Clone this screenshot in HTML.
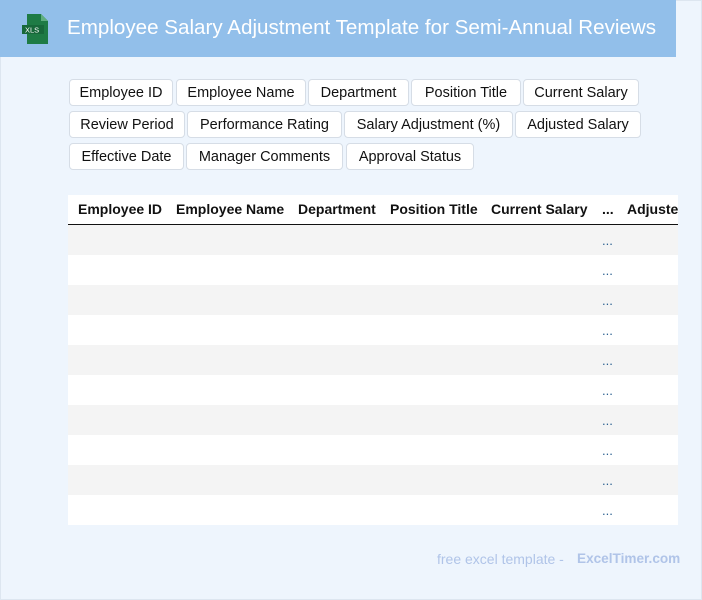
<!DOCTYPE html>
<html><head><style>
body{margin:0;width:702px;height:600px;background:#eef5fd;font-family:"Liberation Sans",sans-serif;position:relative;overflow:hidden}
.frame{position:absolute;left:0;top:0;width:700px;height:598px;border:1px solid #dde6f0;}
.hdr{position:absolute;left:0;top:0;width:676px;height:57px;background:#92bfea}
.hdr h1{position:absolute;left:67px;top:16px;margin:0;font-size:20.6px;font-weight:normal;color:#fff;white-space:nowrap}
.tag{position:absolute;height:27px;line-height:27px;background:#fff;border:1px solid #d6dde6;border-radius:4px;font-size:14.5px;color:#111;text-align:center;box-sizing:border-box}
.tbl{position:absolute;left:68px;top:195px;width:610px;height:330px;background:#fff;overflow:hidden}
.th{position:absolute;top:0;height:29px;line-height:29px;font-weight:bold;font-size:14px;color:#111;white-space:nowrap}
.line{position:absolute;left:0;top:29px;width:610px;height:1.5px;background:#111}
.row{position:absolute;left:0;width:610px;height:30px}
.dots{position:absolute;left:534px;font-size:13px;color:#2a5f8f}
.foot{position:absolute;top:551px;font-size:14px;color:#b0c4e8}
</style></head><body>
<div class="frame"></div>
<div class="hdr">
<svg style="position:absolute;left:22px;top:14px" width="28" height="30" viewBox="0 0 28 30"><path d="M5 0h14l7 7v23H5z" fill="#1e7b45"/><path d="M19 0v7h7z" fill="#5fae7f"/><rect x="0" y="11" width="22" height="9" fill="#17683a"/><text x="3" y="18.5" font-size="7.5" fill="#fff" font-family="Liberation Sans">XLS</text></svg>
<h1>Employee Salary Adjustment Template for Semi-Annual Reviews</h1>
</div>
<div class="tag" style="left:69px;top:79px;width:104px">Employee ID</div>
<div class="tag" style="left:176px;top:79px;width:130px">Employee Name</div>
<div class="tag" style="left:308px;top:79px;width:101px">Department</div>
<div class="tag" style="left:411px;top:79px;width:110px">Position Title</div>
<div class="tag" style="left:523px;top:79px;width:116px">Current Salary</div>
<div class="tag" style="left:69px;top:111px;width:116px">Review Period</div>
<div class="tag" style="left:187px;top:111px;width:155px">Performance Rating</div>
<div class="tag" style="left:344px;top:111px;width:169px">Salary Adjustment (%)</div>
<div class="tag" style="left:515px;top:111px;width:126px">Adjusted Salary</div>
<div class="tag" style="left:69px;top:143px;width:115px">Effective Date</div>
<div class="tag" style="left:186px;top:143px;width:157px">Manager Comments</div>
<div class="tag" style="left:346px;top:143px;width:128px">Approval Status</div>
<div class="tbl">
<div class="th" style="left:10px">Employee ID</div>
<div class="th" style="left:108px">Employee Name</div>
<div class="th" style="left:230px">Department</div>
<div class="th" style="left:322px">Position Title</div>
<div class="th" style="left:423px">Current Salary</div>
<div class="th" style="left:534px">...</div>
<div class="th" style="left:559px">Adjusted Salary</div>
<div class="line"></div>
<div class="row" style="top:30px;background:#f4f4f4"><span class="dots" style="top:8px">...</span></div>
<div class="row" style="top:60px"><span class="dots" style="top:8px">...</span></div>
<div class="row" style="top:90px;background:#f4f4f4"><span class="dots" style="top:8px">...</span></div>
<div class="row" style="top:120px"><span class="dots" style="top:8px">...</span></div>
<div class="row" style="top:150px;background:#f4f4f4"><span class="dots" style="top:8px">...</span></div>
<div class="row" style="top:180px"><span class="dots" style="top:8px">...</span></div>
<div class="row" style="top:210px;background:#f4f4f4"><span class="dots" style="top:8px">...</span></div>
<div class="row" style="top:240px"><span class="dots" style="top:8px">...</span></div>
<div class="row" style="top:270px;background:#f4f4f4"><span class="dots" style="top:8px">...</span></div>
<div class="row" style="top:300px"><span class="dots" style="top:8px">...</span></div>
</div>
<div class="foot" style="left:437px">free excel template -</div>
<div class="foot" style="left:577px;font-weight:bold;font-size:13.6px">ExcelTimer.com</div>
</body></html>
